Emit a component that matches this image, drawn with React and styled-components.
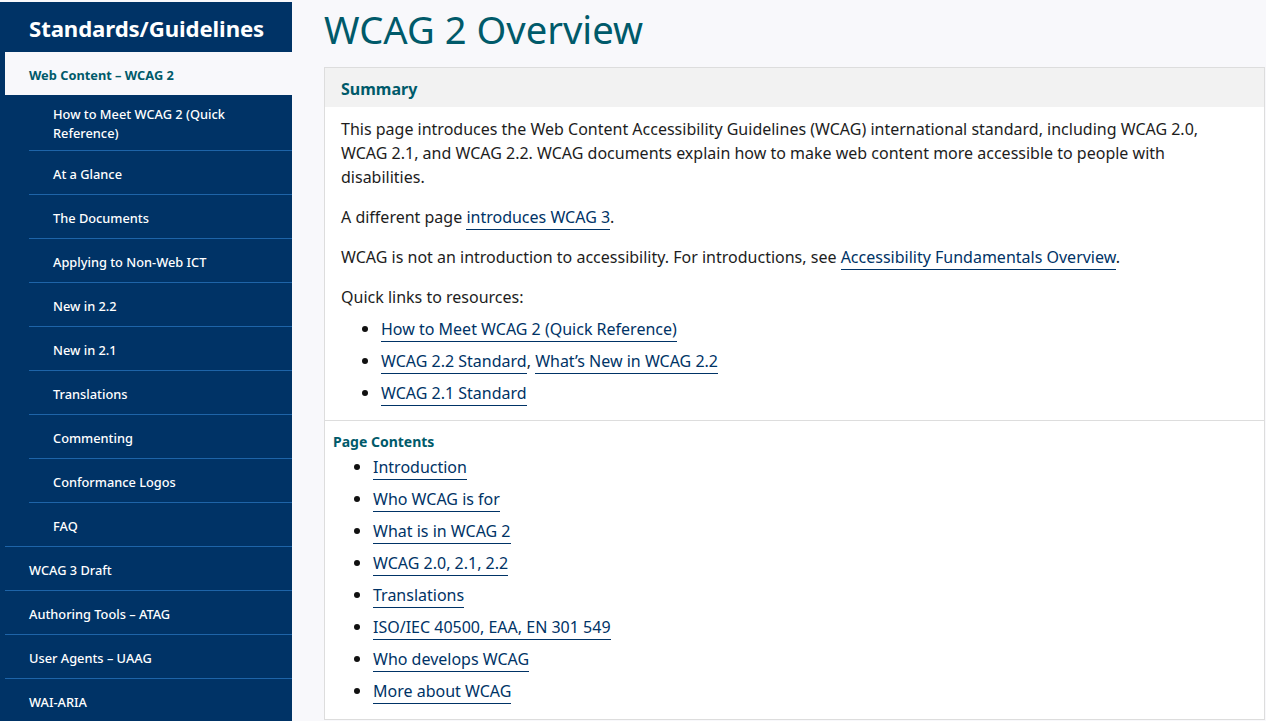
import React from "react";
import styled, { createGlobalStyle } from "styled-components";

const GlobalStyle = createGlobalStyle`
  html, body {
    margin: 0;
    padding: 0;
    background: #f8f8fb;
    font-family: "Noto Sans", "Open Sans", sans-serif;
    color: #1d1d1d;
  }
`;

const Page = styled.div`
  display: flex;
  align-items: flex-start;
  gap: 32px;
  height: 721px;
  overflow: hidden;
`;

const Sidebar = styled.nav`
  width: 292px;
  flex-shrink: 0;
  margin-top: 2px;
  background: #036;
  min-height: 740px;
`;

const SideHeading = styled.h2`
  margin: 0;
  height: 50px;
  padding: 2px 0 0 29px;
  box-sizing: border-box;
  display: flex;
  align-items: center;
  color: #fff;
  font-size: 22.2px;
  font-weight: 700;
  letter-spacing: -0.1px;
`;

const NavList = styled.ul`
  list-style: none;
  margin: 0;
  padding: 0;
`;

const NavItem = styled.li`
  margin-left: ${({ $sub }) => ($sub ? "29px" : "5px")};
  padding: 3px 20px 0 24px;
  min-height: ${({ $tall, $active }) => ($tall ? "55px" : $active ? "43px" : "44px")};
  display: flex;
  align-items: center;
  border-top: ${({ $first, $active }) => ($first || $active ? "none" : "1px solid #1e64a8")};
  background: ${({ $active }) => ($active ? "#f8f8fb" : "transparent")};
  color: ${({ $active }) => ($active ? "#005a6a" : "#fff")};
  font-size: 12.8px;
  font-weight: ${({ $active }) => ($active ? 700 : 500)};
  line-height: 19px;
  box-sizing: border-box;
`;

const Main = styled.main`
  flex: 1;
  padding-right: 1px;
`;

const Title = styled.h1`
  margin: 0;
  padding-top: 4px;
  height: 67px;
  box-sizing: border-box;
  color: #005a6a;
  font-size: 38.2px;
  font-weight: 400;
  line-height: 50px;
`;

const Box = styled.section`
  border: 1px solid #ddd;
  background: #fff;
`;

const BoxHeader = styled.div`
  background: #f2f2f2;
  height: 39px;
  padding: 2px 0 0 16px;
  box-sizing: border-box;
  display: flex;
  align-items: center;
  color: #005a6a;
  font-size: 16px;
  font-weight: 700;
`;

const BoxBody = styled.div`
  padding: 10px 16px 7px 16px;
  font-size: 16px;
  line-height: 24px;
`;

const Para = styled.p`
  margin: 0 0 ${({ $tight }) => ($tight ? 8 : 16)}px;
`;

const Link = styled.a`
  color: #036;
  text-decoration: none;
  border-bottom: 1px solid #036;
  padding-bottom: 1px;
`;

const List = styled.ul`
  list-style: none;
  margin: 0;
  padding-left: ${({ $indent }) => $indent}px;
  line-height: 24px;
  font-size: 16px;
`;

const ListItem = styled.li`
  position: relative;
  margin-bottom: 8px;

  &::before {
    content: "";
    position: absolute;
    left: -19px;
    top: 9px;
    width: 6px;
    height: 6px;
    border-radius: 50%;
    background: #111;
  }
`;

const Contents = styled.div`
  border-top: 1px solid #ddd;
  padding: 11px 8px 8px;
`;

const ContentsTitle = styled.h2`
  margin: 0 0 3px;
  color: #005a6a;
  font-size: 14px;
  font-weight: 700;
  line-height: 20px;
`;

const subItems = [
  { label: "How to Meet WCAG 2 (Quick Reference)", tall: true },
  { label: "At a Glance" },
  { label: "The Documents" },
  { label: "Applying to Non-Web ICT" },
  { label: "New in 2.2" },
  { label: "New in 2.1" },
  { label: "Translations" },
  { label: "Commenting" },
  { label: "Conformance Logos" },
  { label: "FAQ" },
];

const topItems = ["WCAG 3 Draft", "Authoring Tools – ATAG", "User Agents – UAAG", "WAI-ARIA"];

const contents = [
  "Introduction",
  "Who WCAG is for",
  "What is in WCAG 2",
  "WCAG 2.0, 2.1, 2.2",
  "Translations",
  "ISO/IEC 40500, EAA, EN 301 549",
  "Who develops WCAG",
  "More about WCAG",
];

export default function App() {
  return (
    <>
      <GlobalStyle />
      <Page>
        <Sidebar>
          <SideHeading>Standards/Guidelines</SideHeading>
          <NavList>
            <NavItem $active>Web Content – WCAG 2</NavItem>
            {subItems.map((item, i) => (
              <NavItem key={item.label} $sub $first={i === 0} $tall={item.tall}>
                {item.label}
              </NavItem>
            ))}
            {topItems.map((label) => (
              <NavItem key={label}>{label}</NavItem>
            ))}
          </NavList>
        </Sidebar>
        <Main>
          <Title>WCAG 2 Overview</Title>
          <Box>
            <BoxHeader>Summary</BoxHeader>
            <BoxBody>
              <Para>
                This page introduces the Web Content Accessibility Guidelines (WCAG) international
                standard, including WCAG 2.0, WCAG 2.1, and WCAG 2.2. WCAG documents explain how to
                make web content more accessible to people with disabilities.
              </Para>
              <Para>
                A different page <Link href="#">introduces WCAG 3</Link>.
              </Para>
              <Para>
                WCAG is not an introduction to accessibility. For introductions, see{" "}
                <Link href="#">Accessibility Fundamentals Overview</Link>.
              </Para>
              <Para $tight>Quick links to resources:</Para>
              <List $indent={40}>
                <ListItem>
                  <Link href="#">How to Meet WCAG 2 (Quick Reference)</Link>
                </ListItem>
                <ListItem>
                  <Link href="#">WCAG 2.2 Standard</Link>, <Link href="#">What’s New in WCAG 2.2</Link>
                </ListItem>
                <ListItem>
                  <Link href="#">WCAG 2.1 Standard</Link>
                </ListItem>
              </List>
            </BoxBody>
            <Contents>
              <ContentsTitle>Page Contents</ContentsTitle>
              <List $indent={40}>
                {contents.map((c) => (
                  <ListItem key={c}>
                    <Link href="#">{c}</Link>
                  </ListItem>
                ))}
              </List>
            </Contents>
          </Box>
        </Main>
      </Page>
    </>
  );
}
